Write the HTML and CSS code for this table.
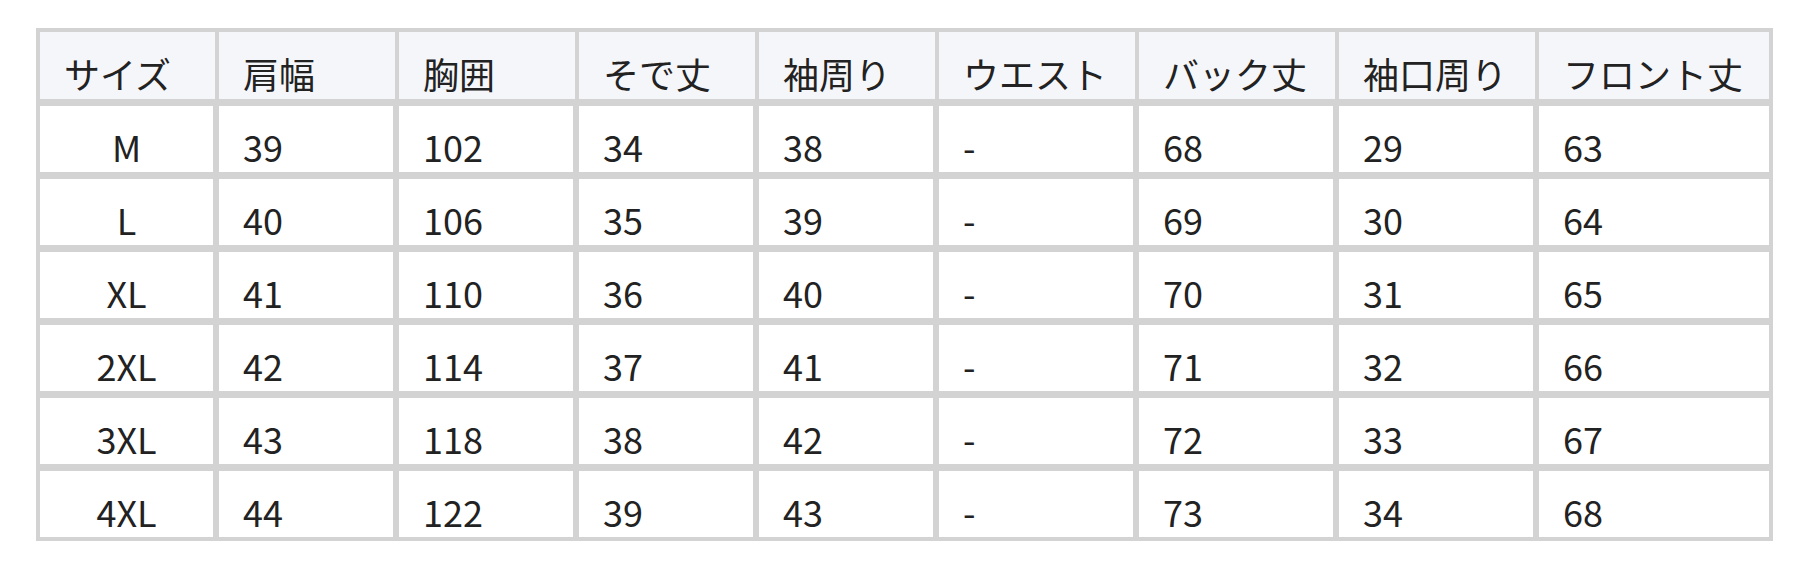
FILE: index.html
```html
<!DOCTYPE html>
<html lang="ja">
<head>
<meta charset="utf-8">
<title>サイズ表</title>
<link rel="stylesheet" href="styles.css">
</head>
<body>
<table class="size-table">
  <thead>
    <tr>
      <th class="c1">サイズ</th>
      <th class="c2">肩幅</th>
      <th class="c2">胸囲</th>
      <th class="c2">そで丈</th>
      <th class="c2">袖周り</th>
      <th class="c3">ウエスト</th>
      <th class="c3">バック丈</th>
      <th class="c3">袖口周り</th>
      <th class="c4">フロント丈</th>
    </tr>
  </thead>
  <tbody>
    <tr><td class="size">M</td><td>39</td><td>102</td><td>34</td><td>38</td><td>-</td><td>68</td><td>29</td><td>63</td></tr>
    <tr><td class="size">L</td><td>40</td><td>106</td><td>35</td><td>39</td><td>-</td><td>69</td><td>30</td><td>64</td></tr>
    <tr><td class="size">XL</td><td>41</td><td>110</td><td>36</td><td>40</td><td>-</td><td>70</td><td>31</td><td>65</td></tr>
    <tr><td class="size">2XL</td><td>42</td><td>114</td><td>37</td><td>41</td><td>-</td><td>71</td><td>32</td><td>66</td></tr>
    <tr><td class="size">3XL</td><td>43</td><td>118</td><td>38</td><td>42</td><td>-</td><td>72</td><td>33</td><td>67</td></tr>
    <tr><td class="size">4XL</td><td>44</td><td>122</td><td>39</td><td>43</td><td>-</td><td>73</td><td>34</td><td>68</td></tr>
  </tbody>
</table>
</body>
</html>
```

FILE: styles.css
```css
html, body {
  margin: 0;
  padding: 0;
  background: #ffffff;
}

body {
  padding: 28px 0 0 36px;
  font-family: "Noto Sans CJK JP", "Noto Sans", sans-serif;
  color: #222222;
}

.size-table {
  border-collapse: separate;
  border-spacing: 0;
  border: 4px solid #d3d3d3;
  table-layout: fixed;
  width: 1737px;
  font-size: 36px;
}

.size-table th,
.size-table td {
  box-sizing: border-box;
  padding: 0 0 0 24px;
  text-align: left;
  font-weight: normal;
  white-space: nowrap;
  vertical-align: top;
}

.size-table th {
  background: #f5f6fa;
  height: 74px;
  line-height: 52px;
  padding-top: 15px;
  border-right: 4px solid #d3d3d3;
  border-bottom: 7px solid #d3d3d3;
}

.size-table th:last-child {
  border-right: 0;
}

.size-table td {
  background: #ffffff;
  height: 73px;
  line-height: 52px;
  padding-top: 14px;
  border-right: 6px solid #d3d3d3;
  border-bottom: 7px solid #d3d3d3;
}

.size-table td:last-child {
  border-right: 0;
}

.size-table tbody tr:last-child td {
  border-bottom: 0;
  height: 66px;
}

.size-table td.size {
  text-align: center;
  padding-left: 0;
}

.c1 { width: 179px; }
.c2 { width: 180px; }
.c3 { width: 200px; }
.c4 { width: 230px; }
```
